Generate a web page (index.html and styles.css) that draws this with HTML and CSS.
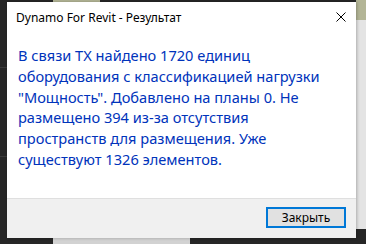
FILE: index.html
```html
<!DOCTYPE html>
<html lang="ru">
<head>
  <meta charset="UTF-8">
  <title>Dynamo For Revit - Результат</title>
  <link rel="stylesheet" href="styles.css">
</head>
<body>
  <div class="desktop">
    <div class="dialog">
      <div class="titlebar">
        <span class="title">Dynamo For Revit - Результат</span>
        <svg class="close" width="10" height="10" viewBox="0 0 10 10">
          <path d="M0.5 0.5 L9.5 9.5 M9.5 0.5 L0.5 9.5" stroke="#000" stroke-width="1" fill="none"/>
        </svg>
      </div>
      <div class="content">
        <p class="message">В связи ТХ найдено 1720 единиц<br>оборудования с классификацией нагрузки<br>"Мощность". Добавлено на планы 0. Не<br>размещено 394 из-за отсутствия<br>пространств для размещения. Уже<br>существуют 1326 элементов.</p>
      </div>
      <div class="footer">
        <button class="btn">Закрыть</button>
      </div>
    </div>
  </div>
</body>
</html>
```
FILE: styles.css
```css
body {
  margin: 0;
  font-family: "Noto Sans", "Open Sans", sans-serif;
}
.desktop {
  width: 366px;
  height: 244px;
  overflow: hidden;
  padding: 2px 0 0 7px;
  box-sizing: border-box;
  background:
    linear-gradient(#b3b596, #b3b596) 53px 0 / 47px 2px no-repeat,
    linear-gradient(#b3b596, #b3b596) 356px 0 / 10px 20px no-repeat,
    linear-gradient(#e4e4e4, #e4e4e4) 356px 20px / 10px 209px no-repeat,
    linear-gradient(#d2d2d2, #d2d2d2) 53px 238px / 137px 6px no-repeat,
    linear-gradient(#3a3a3a, #3a3a3a) 0 67px / 7px 1px no-repeat,
    linear-gradient(#3a3a3a, #3a3a3a) 0 156px / 7px 1px no-repeat,
    #262626;
}
.dialog {
  width: 349px;
  height: 236px;
  background: white;
  display: flex;
  flex-direction: column;
  box-shadow: 1px 0 3px rgba(0,0,0,0.25);
}
.titlebar {
  height: 30px;
  display: flex;
  align-items: center;
  justify-content: space-between;
  padding: 0 10px 0 9px;
}
.title {
  font-size: 12px;
  color: #000;
}
.content {
  flex: 1;
  padding: 13px 11px 0 11px;
}
.message {
  margin: 0;
  font-size: 14.6px;
  line-height: 20.8px;
  color: #0033bb;
}
.footer {
  height: 40px;
  box-sizing: border-box;
  background: #f0f0f0;
  border-top: 1px solid #dfdfdf;
  display: flex;
  justify-content: flex-end;
  align-items: flex-start;
  padding: 8px 10px 0 0;
}
.btn {
  width: 80px;
  height: 21px;
  font-family: "Noto Sans", "Open Sans", sans-serif;
  font-size: 12px;
  color: #000;
  background: #e1e1e1;
  border: 2px solid #0078d7;
  padding: 0;
  line-height: 15px;
}
```
